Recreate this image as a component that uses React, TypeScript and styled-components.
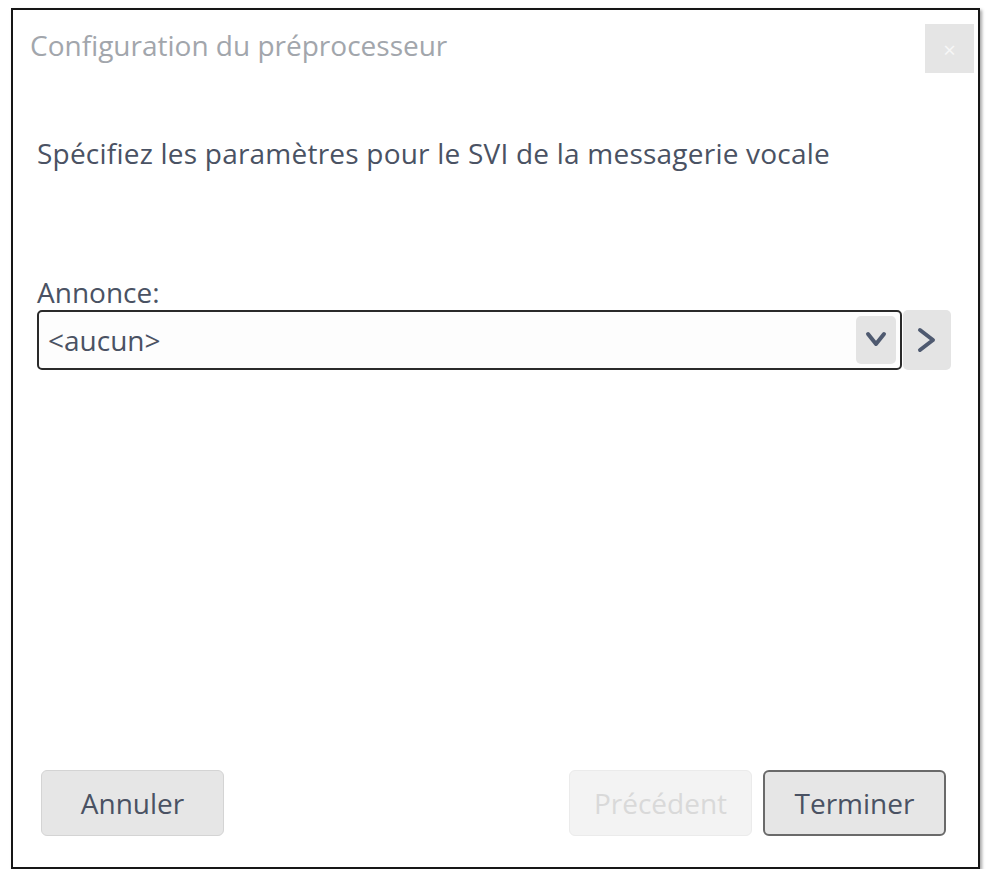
import React from "react";
import styled, { createGlobalStyle } from "styled-components";

const Global = createGlobalStyle`
  html, body {
    margin: 0;
    padding: 0;
    background: #ffffff;
  }
  body {
    font-family: "Open Sans", "Noto Sans", sans-serif;
  }
`;

const Dialog = styled.div`
  box-sizing: border-box;
  margin: 8px 0 0 11px;
  width: 969px;
  height: 861px;
  border: 2px solid #161616;
  box-shadow: 2px 2px 3px rgba(0, 0, 0, 0.35);
  background: #ffffff;
  display: flex;
  flex-direction: column;
`;

const Header = styled.div`
  display: flex;
  justify-content: space-between;
  align-items: flex-start;
  padding: 14px 4px 0 17px;
`;

const Title = styled.h1`
  margin: 0;
  font-size: 28px;
  font-weight: 400;
  line-height: 42px;
  color: #a2a6ac;
`;

const CloseButton = styled.button`
  width: 49px;
  height: 49px;
  border: none;
  background: #e5e5e5;
  color: #f7f7f7;
  font-size: 22px;
  font-family: inherit;
  padding: 0;
  display: flex;
  align-items: center;
  justify-content: center;
`;

const Body = styled.div`
  flex: 1;
  padding: 0 27px 0 24px;
`;

const Subtitle = styled.p`
  margin: 63px 0 0;
  font-size: 28px;
  line-height: 34px;
  letter-spacing: 0.22px;
  color: #4a5263;
`;

const FieldLabel = styled.label`
  display: block;
  margin-top: 107px;
  font-size: 28px;
  line-height: 30px;
  color: #4a5263;
`;

const SelectRow = styled.div`
  display: flex;
  align-items: center;
  gap: 1px;
  margin-top: 3px;
`;

const SelectBox = styled.div`
  box-sizing: border-box;
  flex: 1;
  height: 60px;
  border: 2px solid #2a2a2a;
  border-radius: 5px;
  background: #fdfdfd;
  display: flex;
  align-items: center;
  justify-content: space-between;
  padding: 0 4px 0 9px;
  font-size: 28px;
  color: #4a5263;
`;

const IconButton = styled.button<{ $size: number }>`
  width: ${(p) => p.$size}px;
  height: ${(p) => (p.$size > 45 ? 60 : 48)}px;
  border: none;
  border-radius: 5px;
  background: #e4e4e4;
  padding: 0;
  display: flex;
  align-items: center;
  justify-content: center;
`;

const Footer = styled.div`
  display: flex;
  align-items: center;
  padding: 0 32px 31px 28px;
  gap: 11px;
`;

const Spacer = styled.div`
  flex: 1;
`;

const ActionButton = styled.button<{ $variant?: "default" | "disabled" | "primary" }>`
  box-sizing: border-box;
  width: 183px;
  height: 66px;
  border-radius: 6px;
  font-family: inherit;
  font-size: 28px;
  background: ${(p) => (p.$variant === "disabled" ? "#f3f3f3" : "#e6e6e6")};
  color: ${(p) => (p.$variant === "disabled" ? "#d9d9d9" : "#4a5263")};
  border: ${(p) =>
    p.$variant === "primary"
      ? "2px solid #6a6a6a"
      : p.$variant === "disabled"
      ? "1px solid #ebebeb"
      : "1px solid #d4d4d4"};
`;

const ChevronDown = () => (
  <svg width="24" height="22" viewBox="0 0 24 22">
    <path
      d="M4 5 L12 15 L20 5"
      fill="none"
      stroke="#4f5a70"
      strokeWidth="4"
      strokeLinecap="round"
      strokeLinejoin="round"
    />
  </svg>
);

const ChevronRight = () => (
  <svg width="24" height="28" viewBox="0 0 24 28">
    <path
      d="M5 4 L18 14 L5 24"
      fill="none"
      stroke="#4f5a70"
      strokeWidth="4"
      strokeLinecap="round"
      strokeLinejoin="round"
    />
  </svg>
);

export default function App() {
  return (
    <>
      <Global />
      <Dialog>
        <Header>
          <Title>Configuration du préprocesseur</Title>
          <CloseButton aria-label="Fermer">×</CloseButton>
        </Header>
        <Body>
          <Subtitle>Spécifiez les paramètres pour le SVI de la messagerie vocale</Subtitle>
          <FieldLabel>Annonce:</FieldLabel>
          <SelectRow>
            <SelectBox>
              <span>&lt;aucun&gt;</span>
              <IconButton $size={40}>
                <ChevronDown />
              </IconButton>
            </SelectBox>
            <IconButton $size={48}>
              <ChevronRight />
            </IconButton>
          </SelectRow>
        </Body>
        <Footer>
          <ActionButton>Annuler</ActionButton>
          <Spacer />
          <ActionButton $variant="disabled" disabled>
            Précédent
          </ActionButton>
          <ActionButton $variant="primary">Terminer</ActionButton>
        </Footer>
      </Dialog>
    </>
  );
}
